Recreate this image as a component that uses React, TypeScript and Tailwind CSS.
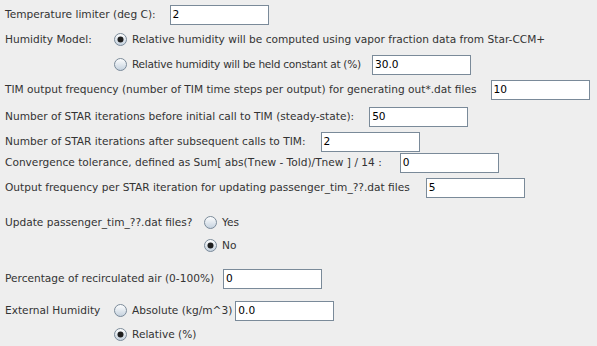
import React from 'react';

const font = { fontFamily: '"DejaVu Sans", "Liberation Sans", sans-serif' };

function Radio({ checked, label, tight }: { checked?: boolean; label: string; tight?: boolean }) {
    const id = checked ? 'rg-on' : 'rg-off';
    return (
        <div className="flex items-center gap-[5px]">
            <svg width="13" height="13" viewBox="0 0 13 13" className="shrink-0">
                <defs>
                    <linearGradient id={id} x1="0" y1="0" x2="0" y2="1">
                        <stop offset="0" stopColor="#ffffff" />
                        <stop offset="1" stopColor="#c3d0dd" />
                    </linearGradient>
                </defs>
                <circle cx="6.5" cy="6.5" r="6" fill={`url(#${id})`} stroke="#7a8a99" strokeWidth="1" />
                {checked && <circle cx="6.5" cy="6.5" r="3" fill="#1f1f1f" />}
            </svg>
            <span className={`whitespace-nowrap ${tight ? 'tracking-[-0.28px]' : ''}`}>{label}</span>
        </div>
    );
}

function Field({ value }: { value: string }) {
    return (
        <div className="w-[99px] h-[20px] bg-white border border-[#7a8a99] pl-[2px] flex items-center text-black shrink-0">
            {value}
        </div>
    );
}

export default function App() {
    return (
        <div
            className="w-[597px] h-[346px] bg-[#eeeeee] text-[#333333] text-[10.6px] pl-[5px] pt-[5px] flex flex-col overflow-hidden whitespace-nowrap"
            style={font}
        >
            {/* temperature */}
            <div className="h-[20px] flex items-center gap-[14px]">
                <span>Temperature limiter (deg C):</span>
                <Field value="2" />
            </div>

            {/* humidity model */}
            <div className="h-[20px] mt-[5px] flex items-center">
                <span className="w-[109px]">Humidity Model:</span>
                <Radio checked label="Relative humidity will be computed using vapor fraction data from Star-CCM+" />
            </div>
            <div className="h-[20px] mt-[5px] flex items-center pl-[109px]">
                <div className="w-[258px]">
                    <Radio tight label="Relative humidity will be held constant at (%)" />
                </div>
                <Field value="30.0" />
            </div>

            <div className="h-[20px] mt-[5px] flex items-center gap-[14px]">
                <span>TIM output frequency (number of TIM time steps per output) for generating out*.dat files</span>
                <Field value="10" />
            </div>
            <div className="h-[20px] mt-[7px] flex items-center gap-[15px]">
                <span>Number of STAR iterations before initial call to TIM (steady-state):</span>
                <Field value="50" />
            </div>
            <div className="h-[20px] mt-[5px] flex items-center gap-[15px]">
                <span>Number of STAR iterations after subsequent calls to TIM:</span>
                <Field value="2" />
            </div>
            <div className="h-[20px] mt-[1px] flex items-center gap-[18px]">
                <span>Convergence tolerance, defined as Sum[ abs(Tnew - Told)/Tnew ] / 14 :</span>
                <Field value="0" />
            </div>
            <div className="h-[20px] mt-[5px] flex items-center gap-[16px]">
                <span>Output frequency per STAR iteration for updating passenger_tim_??.dat files</span>
                <Field value="5" />
            </div>

            {/* update files */}
            <div className="h-[20px] mt-[15px] flex items-center">
                <span className="w-[199px]">Update passenger_tim_??.dat files?</span>
                <Radio label="Yes" />
            </div>
            <div className="h-[20px] mt-[3px] flex items-center pl-[199px]">
                <Radio checked label="No" />
            </div>

            <div className="h-[20px] mt-[13px] flex items-center gap-[9px]">
                <span>Percentage of recirculated air (0-100%)</span>
                <Field value="0" />
            </div>

            {/* external humidity */}
            <div className="h-[20px] mt-[12px] flex items-center">
                <span className="w-[109px]">External Humidity</span>
                <div className="flex items-center gap-[3px]">
                    <Radio label="Absolute (kg/m^3)" />
                    <Field value="0.0" />
                </div>
            </div>
            <div className="h-[20px] mt-[4px] flex items-center pl-[109px]">
                <Radio checked label="Relative (%)" />
            </div>
        </div>
    );
}
